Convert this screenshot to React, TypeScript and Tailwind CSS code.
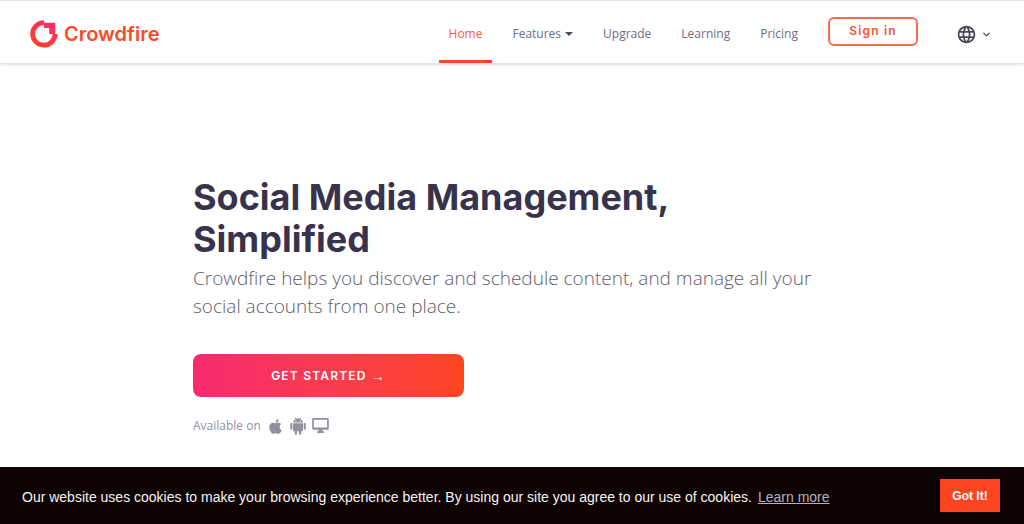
import { FaApple } from "react-icons/fa";
import { MdLanguage } from "react-icons/md";
import { ChevronDown } from "lucide-react";

type NavItem = {
  label: string;
  href: string;
  active?: boolean;
  hasMenu?: boolean;
};

const NAV_ITEMS: NavItem[] = [
  { label: "Home", href: "#home", active: true },
  { label: "Features", href: "#features", hasMenu: true },
  { label: "Upgrade", href: "#upgrade" },
  { label: "Learning", href: "#learning" },
  { label: "Pricing", href: "#pricing" },
];

function Logo() {
  return (
    <a href="#home" className="flex items-center gap-1.5 pt-1 font-['Inter',sans-serif] text-xl font-semibold text-[#fd4a24]">
      <svg width="28" height="28" viewBox="0 0 28 28" aria-hidden="true">
        <defs>
          <linearGradient id="logo-fill" x1="0.8" y1="0" x2="0.2" y2="1">
            <stop offset="0" stopColor="#f92c6b" />
            <stop offset="1" stopColor="#fd4326" />
          </linearGradient>
        </defs>
        <path
          fill="url(#logo-fill)"
          d="M14 0.2V2.8H25.2V14H27.6A13.7 13.7 0 1 1 14 0.2ZM14 5.2A8.8 8.8 0 1 0 22.6 14H19.2V8H14Z"
        />
      </svg>
      Crowdfire
    </a>
  );
}

function AndroidIcon() {
  return (
    <svg width="16" height="18" viewBox="0 0 16 18" fill="currentColor" aria-hidden="true">
      <path d="M3 5.4A5 4.6 0 0 1 5.5 1.9L4.7 0.6L5.2 0.2L6.1 1.5A5.4 5.4 0 0 1 9.9 1.5L10.8 0.2L11.3 0.6L10.5 1.9A5 4.6 0 0 1 13 5.4ZM5.3 3.2V4.2H6.3V3.2ZM9.7 3.2V4.2H10.7V3.2Z" />
      <path d="M3 6.2H13V13.2A1 1 0 0 1 12 14.2H11.2V16.8A1.1 1.1 0 0 1 9 16.8V14.2H7V16.8A1.1 1.1 0 0 1 4.8 16.8V14.2H4A1 1 0 0 1 3 13.2Z" />
      <rect x="0.2" y="6" width="2.1" height="6.8" rx="1" />
      <rect x="13.7" y="6" width="2.1" height="6.8" rx="1" />
    </svg>
  );
}

function DesktopIcon() {
  return (
    <svg width="17" height="16" viewBox="0 0 17 16" fill="currentColor" aria-hidden="true">
      <path
        fillRule="evenodd"
        d="M1.5 0H15.5A1.3 1.3 0 0 1 16.8 1.3V10.5A1.3 1.3 0 0 1 15.5 11.8H10.5V13.3H12V15H5V13.3H6.5V11.8H1.5A1.3 1.3 0 0 1 0.2 10.5V1.3A1.3 1.3 0 0 1 1.5 0ZM1.9 1.7V9.6H15.1V1.7Z"
      />
    </svg>
  );
}

function Header() {
  return (
    <header className="flex h-16 items-stretch justify-between border-y border-[#e4e4e4] bg-white pl-[30px] pr-8 shadow-[0_1px_2px_rgba(0,0,0,0.12)]">
      <Logo />
      <div className="flex items-stretch">
        <nav className="flex items-stretch gap-2.5 font-['Open_Sans',sans-serif] text-xs text-[#6f6c7f]">
          {NAV_ITEMS.map((item) => (
            <a
              key={item.label}
              href={item.href}
              className={`flex items-center gap-1 border-b-3 px-2.5 pt-1.5 ${
                item.active ? "border-[#fd4521] text-[#fd5a45]" : "border-transparent"
              }`}
            >
              {item.label}
              {item.hasMenu && (
                <svg width="8" height="4" viewBox="0 0 8 4" aria-hidden="true">
                  <path d="M0 0h8L4 4z" fill="#4a465e" />
                </svg>
              )}
            </a>
          ))}
        </nav>
        <button
          type="button"
          className="mb-4 ml-5 mt-4 h-[29px] w-[90px] rounded-md border-2 border-[#fb6a4f] pb-0.5 font-['Inter',sans-serif] text-xs font-semibold leading-none tracking-widest text-[#fb4f3a]"
        >
          Sign in
        </button>
        <button type="button" aria-label="Language" className="ml-[38px] flex items-center gap-1 pt-1 text-[#4a465e]">
          <MdLanguage size={21} />
          <ChevronDown size={11} strokeWidth={3} />
        </button>
      </div>
    </header>
  );
}

function Hero() {
  return (
    <main className="mx-auto max-w-[638px] pt-28">
      <h1 className="font-['Inter',sans-serif] text-4xl font-bold leading-[42px] text-[#38334d]">
        Social Media Management, Simplified
      </h1>
      <p className="mt-1 font-['Open_Sans',sans-serif] text-[19px] font-light leading-7 text-[#5f5c6e]">
        Crowdfire helps you discover and schedule content, and manage all your social accounts from one place.
      </p>
      <a
        href="#signup"
        className="mt-[34px] flex h-[43px] w-[271px] items-center justify-center gap-1 rounded-lg bg-linear-to-r from-[#f72a6e] to-[#fc461e] font-['Inter',sans-serif] text-xs font-semibold tracking-widest text-white"
      >
        GET STARTED <span className="font-['Liberation_Sans',sans-serif] text-sm font-normal">→</span>
      </a>
      <div className="mt-5 flex items-center gap-1.5 font-['Open_Sans',sans-serif] text-xs text-[#93909e]">
        <span>Available on</span>
        <div className="flex items-center gap-1.5">
          <FaApple size={17} />
          <AndroidIcon />
          <DesktopIcon />
        </div>
      </div>
    </main>
  );
}

function CookieBar() {
  return (
    <div className="fixed inset-x-0 bottom-0 flex items-center justify-between bg-[#0e0302] py-3 pl-[22px] pr-6 font-['Liberation_Sans',sans-serif] text-sm text-[#f4f4f4]">
      <p className="pt-0.5">
        Our website uses cookies to make your browsing experience better. By using our site you agree to our use of
        cookies.
        <a href="#cookies" className="ml-1.5 text-[#b5b0c2] underline">
          Learn more
        </a>
      </p>
      <button type="button" className="h-[33px] w-[60px] bg-[#fd4521] text-xs font-bold text-white">
        Got It!
      </button>
    </div>
  );
}

export default function App() {
  return (
    <div className="min-h-screen bg-white">
      <Header />
      <Hero />
      <CookieBar />
    </div>
  );
}
